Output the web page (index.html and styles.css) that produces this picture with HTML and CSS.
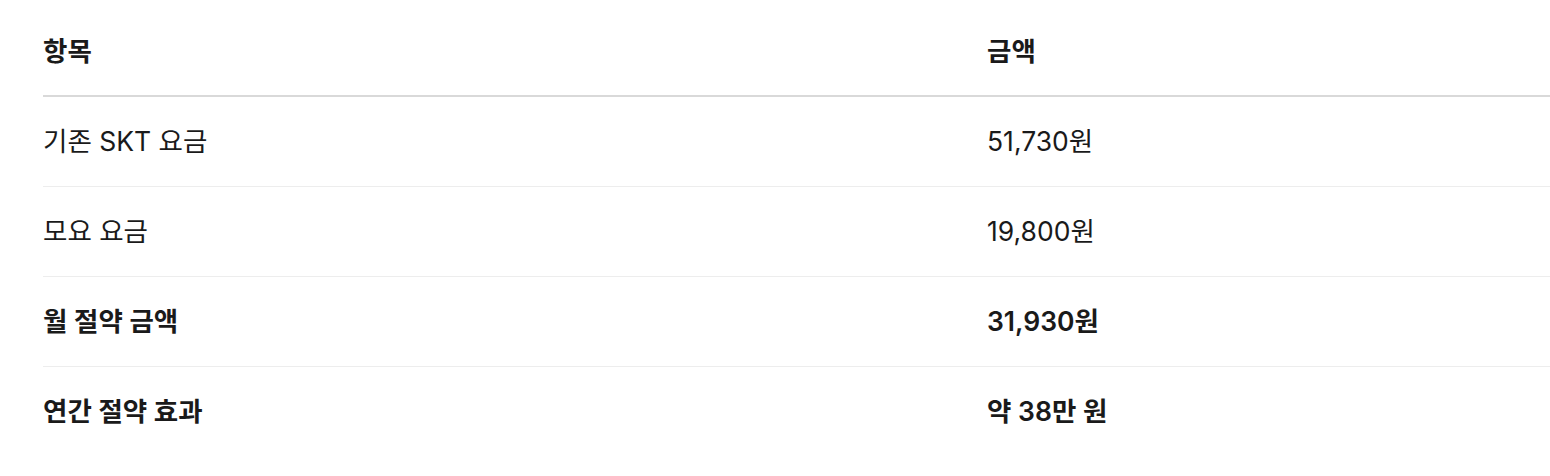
FILE: index.html
```html
<!DOCTYPE html>
<html lang="ko">
<head>
<meta charset="utf-8">
<link rel="stylesheet" href="styles.css">
</head>
<body>
<div class="wrap">
  <div class="table">
    <div class="row head"><div class="cell">항목</div><div class="cell">금액</div></div>
    <div class="row"><div class="cell">기존 SKT 요금</div><div class="cell">51,730원</div></div>
    <div class="row"><div class="cell">모요 요금</div><div class="cell">19,800원</div></div>
    <div class="row strong"><div class="cell">월 절약 금액</div><div class="cell">31,930원</div></div>
    <div class="row strong last"><div class="cell">연간 절약 효과</div><div class="cell">약 38만 원</div></div>
  </div>
</div>
</body>
</html>
```
FILE: styles.css
```css
html, body { margin: 0; padding: 0; background: #fff; }
body {
  font-family: Inter, "Noto Sans CJK KR", "Noto Sans", sans-serif;
  color: #1a1a1a;
  font-size: 26.5px;
}
.wrap { padding: 7px 0 0 43px; }
.table { display: flex; flex-direction: column; }
.row {
  display: grid;
  grid-template-columns: 944px 1fr;
  height: 89px;
  align-items: center;
  border-bottom: 1px solid #ededed;
}
.row.head { height: 88px; border-bottom: 2px solid #d9d9d9; font-weight: 600; }
.row.strong { font-weight: 600; }
.row.last { border-bottom: none; }
.cell { line-height: 1; }
```
